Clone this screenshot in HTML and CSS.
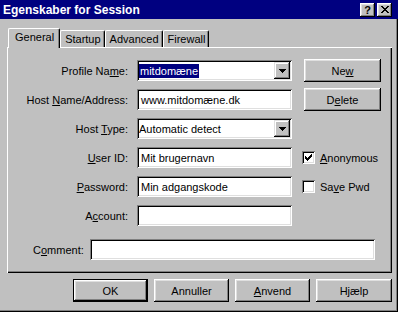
FILE: index.html
```html
<!DOCTYPE html>
<html lang="da">
<head>
    <meta charset="UTF-8">
    <title>Egenskaber for Session</title>
    <link rel="stylesheet" href="styles.css">
</head>
<body>
    <div class="dialog">
        <div class="titlebar">
            <span class="title">Egenskaber for Session</span>
            <div class="caption-btns">
                <span class="cap-btn help">?</span>
                <span class="cap-btn">
                    <svg width="8" height="7" viewBox="0 0 8 7" shape-rendering="crispEdges"><path d="M0 0h2v1H0zM6 0h2v1H6zM1 1h2v1H1zM5 1h2v1H5zM2 2h4v1H2zM3 3h2v1H3zM2 4h4v1H2zM1 5h2v1H1zM5 5h2v1H5zM0 6h2v1H0zM6 6h2v1H6z" fill="#000"/></svg>
                </span>
            </div>
        </div>

        <div class="content">
            <div class="tabs">
                <div class="tab active">General</div>
                <div class="tab">Startup</div>
                <div class="tab">Advanced</div>
                <div class="tab">Firewall</div>
            </div>

            <div class="panel">
                <div class="form">
                    <label class="lbl">Profile Na<u>m</u>e:</label>
                    <div class="field combo">
                        <span class="value"><span class="selected">mitdomæne</span></span>
                        <span class="drop">
                            <svg width="7" height="4" viewBox="0 0 7 4" shape-rendering="crispEdges"><path d="M0 0h7v1H0zM1 1h5v1H1zM2 2h3v1H2zM3 3h1v1H3z" fill="#000"/></svg>
                        </span>
                    </div>
                    <button class="btn side">Ne<u>w</u></button>

                    <label class="lbl">Host <u>N</u>ame/Address:</label>
                    <div class="field"><span class="value">www.mitdomæne.dk</span></div>
                    <button class="btn side">D<u>e</u>lete</button>

                    <label class="lbl">Host <u>T</u>ype:</label>
                    <div class="field combo">
                        <span class="value">Automatic detect</span>
                        <span class="drop">
                            <svg width="7" height="4" viewBox="0 0 7 4" shape-rendering="crispEdges"><path d="M0 0h7v1H0zM1 1h5v1H1zM2 2h3v1H2zM3 3h1v1H3z" fill="#000"/></svg>
                        </span>
                    </div>
                    <div></div>

                    <label class="lbl"><u>U</u>ser ID:</label>
                    <div class="field"><span class="value">Mit brugernavn</span></div>
                    <div class="check">
                        <span class="box">
                            <svg width="7" height="7" viewBox="0 0 7 7" shape-rendering="crispEdges"><path d="M6 0h1v1H6zM5 1h2v1H5zM0 2h1v1H0zM4 2h3v1H4zM0 3h2v1H0zM3 3h3v1H3zM0 4h5v1H0zM1 5h3v1H1zM2 6h1v1H2z" fill="#000"/></svg>
                        </span>
                        <span><u>A</u>nonymous</span>
                    </div>

                    <label class="lbl"><u>P</u>assword:</label>
                    <div class="field"><span class="value">Min adgangskode</span></div>
                    <div class="check">
                        <span class="box"></span>
                        <span>Sa<u>v</u>e Pwd</span>
                    </div>

                    <label class="lbl">A<u>c</u>count:</label>
                    <div class="field"></div>
                    <div></div>
                </div>

                <div class="comment-row">
                    <label class="lbl-left">C<u>o</u>mment:</label>
                    <div class="field"></div>
                </div>
            </div>

            <div class="actions">
                <button class="btn default">OK</button>
                <button class="btn">Annuller</button>
                <button class="btn"><u>A</u>nvend</button>
                <button class="btn wide">Hjælp</button>
            </div>
        </div>
    </div>
</body>
</html>
```

FILE: styles.css
```css
* {
    margin: 0;
    padding: 0;
    box-sizing: border-box;
}

body {
    width: 398px;
    height: 312px;
    overflow: hidden;
    background-color: #c0c0c0;
    font-family: "Liberation Sans", Arial, sans-serif;
    font-size: 11px;
    color: #000;
}

u {
    text-decoration: underline;
    text-underline-offset: 1px;
}

.dialog {
    width: 398px;
    height: 312px;
    background-color: #c0c0c0;
    box-shadow: inset -1px -1px #000, inset -2px -2px #808080;
}

/* title bar */
.titlebar {
    height: 19px;
    background-color: #000080;
    color: #fff;
    display: flex;
    align-items: center;
    justify-content: space-between;
    padding: 0 6px 0 3px;
}

.title {
    font-weight: bold;
    font-size: 12px;
}

.caption-btns {
    display: flex;
    gap: 2px;
}

.cap-btn {
    width: 15px;
    height: 14px;
    display: flex;
    align-items: center;
    justify-content: center;
    background-color: #c0c0c0;
    color: #000;
    box-shadow: inset -1px -1px #000, inset 1px 1px #fff, inset -2px -2px #808080, inset 2px 2px #dfdfdf;
}

.cap-btn.help {
    font-weight: bold;
    font-size: 11px;
    line-height: 14px;
}

/* tabs */
.content {
    padding: 9px 6px 0 7px;
}

.tabs {
    display: flex;
    align-items: flex-end;
    height: 20px;
    padding-left: 1px;
    position: relative;
    z-index: 1;
    margin-bottom: -1px;
}

.tab {
    height: 17px;
    margin-bottom: 1px;
    padding: 1px 3px 0 4px;
    line-height: 14px;
    background-color: #c0c0c0;
    border-top: 1px solid #fff;
    border-left: 1px solid #fff;
    border-right: 1px solid #000;
    border-radius: 2px 2px 0 0;
    box-shadow: inset -1px 0 #808080;
}

.tab.active {
    height: 20px;
    margin-bottom: 0;
    padding: 1px 5px 0 6px;
}

.panel {
    width: 385px;
    height: 226px;
    padding-top: 13px;
    box-shadow: inset 1px 1px #fff, inset -1px -1px #000, inset -2px -2px #808080;
}

/* form */
.form {
    display: grid;
    grid-template-columns: 121px 155px 80px;
    grid-auto-rows: 21px;
    column-gap: 9px;
    row-gap: 8px;
    align-items: center;
}

.form > :nth-child(3n) {
    margin-left: 1px;
}

.lbl {
    text-align: right;
}

.field {
    height: 21px;
    background-color: #fff;
    display: flex;
    align-items: center;
    padding: 2px 2px 2px 4px;
    box-shadow: inset 1px 1px #808080, inset -1px -1px #fff, inset 2px 2px #000, inset -2px -2px #dfdfdf;
}

.field .value {
    flex: 1;
    white-space: nowrap;
}

.combo {
    padding-left: 2px;
}

.selected {
    background-color: #000080;
    color: #fff;
    padding: 1px 1px;
}

.drop {
    width: 16px;
    height: 17px;
    display: flex;
    align-items: center;
    justify-content: center;
    background-color: #c0c0c0;
    box-shadow: inset -1px -1px #000, inset 1px 1px #dfdfdf, inset -2px -2px #808080, inset 2px 2px #fff;
}

.btn {
    width: 75px;
    height: 23px;
    background-color: #c0c0c0;
    border: none;
    font-family: inherit;
    font-size: 11px;
    color: #000;
    box-shadow: inset -1px -1px #000, inset 1px 1px #fff, inset -2px -2px #808080, inset 2px 2px #dfdfdf;
}

.btn.side {
    width: 77px;
    margin-left: 3px;
}

.btn.default {
    box-shadow: inset 0 0 0 1px #000, inset -2px -2px #000, inset 2px 2px #fff, inset -3px -3px #808080, inset 3px 3px #dfdfdf;
}

.btn.wide {
    width: 76px;
}

.check {
    display: flex;
    align-items: center;
    gap: 5px;
}

.box {
    width: 13px;
    height: 13px;
    display: flex;
    align-items: center;
    justify-content: center;
    background-color: #fff;
    box-shadow: inset 1px 1px #808080, inset -1px -1px #fff, inset 2px 2px #000, inset -2px -2px #dfdfdf;
}

.comment-row {
    display: grid;
    grid-template-columns: 57px 285px;
    align-items: center;
    margin-top: 13px;
    padding-left: 26px;
}

.comment-row .field {
    height: 21px;
}

/* bottom buttons */
.actions {
    display: flex;
    justify-content: flex-end;
    gap: 6px;
    margin-top: 6px;
}
```
